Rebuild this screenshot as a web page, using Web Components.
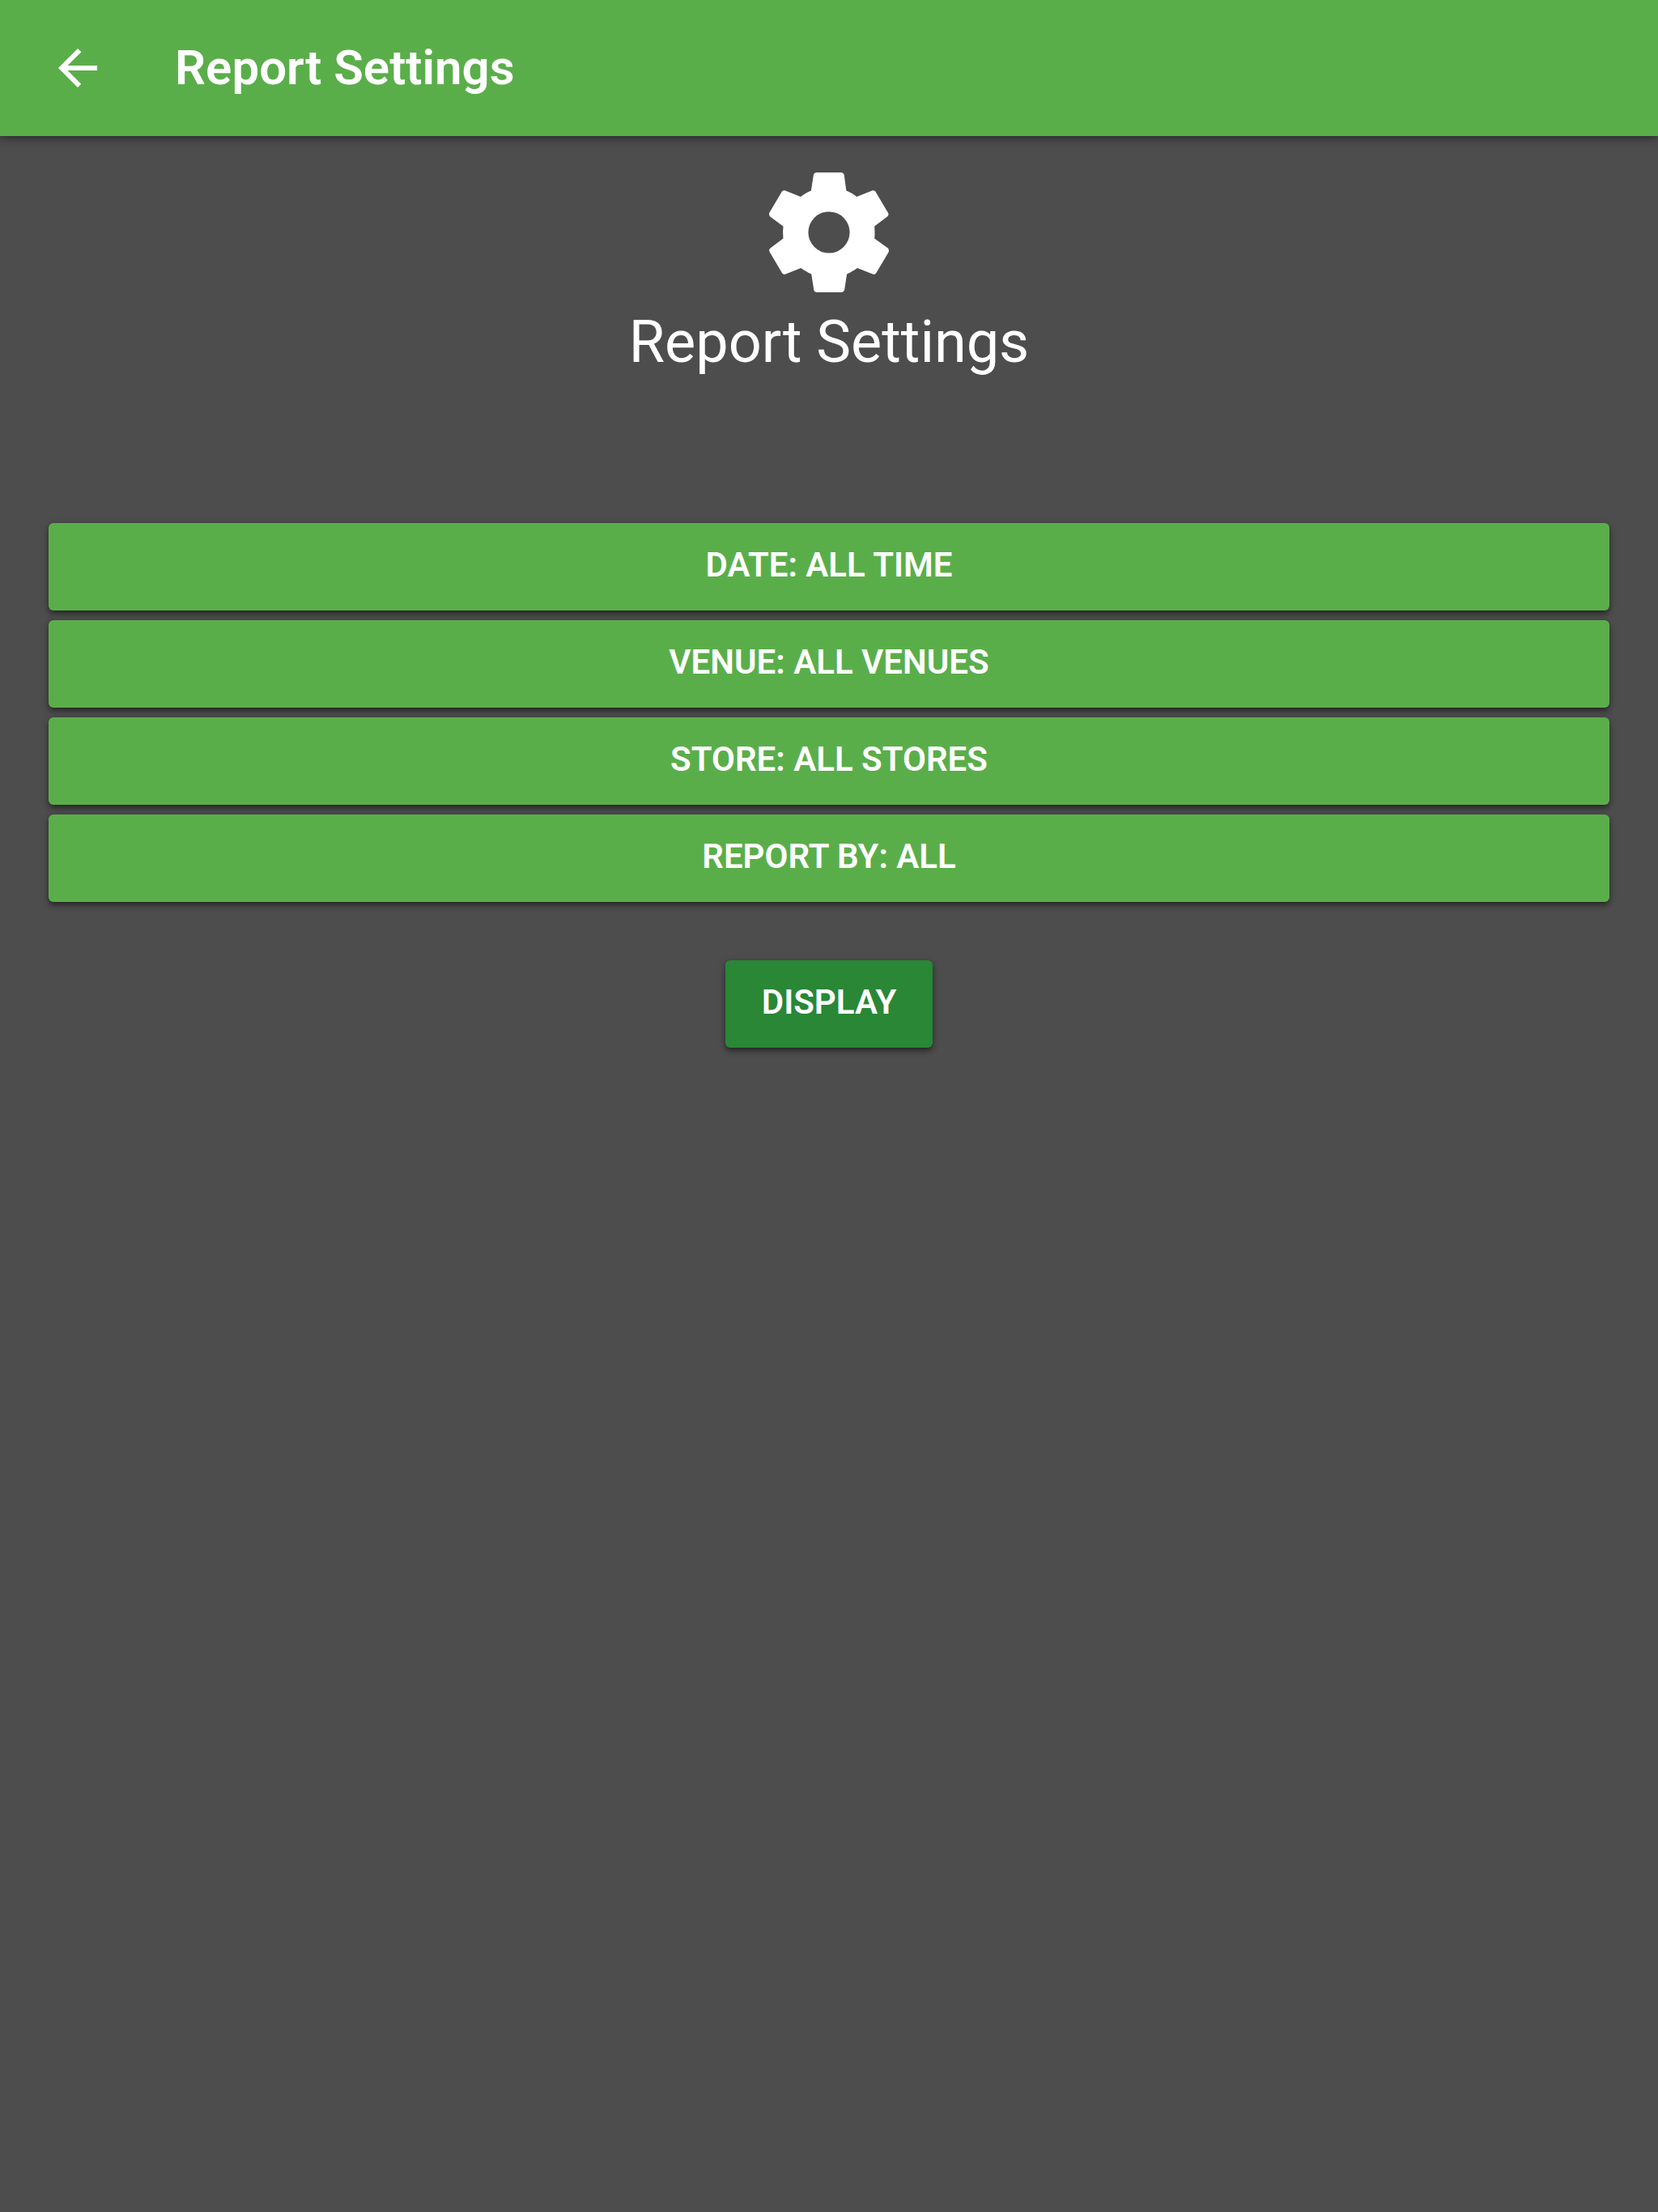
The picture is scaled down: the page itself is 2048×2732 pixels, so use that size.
<!DOCTYPE html>
<html lang="en">
<head>
<meta charset="utf-8">
<meta name="viewport" content="width=device-width, initial-scale=1">
<title>Report Settings</title>
<style>
    html, body {
        margin: 0;
        min-height: 100%;
        background: #4d4d4d;
    }
    body {
        font-family: Roboto, "Liberation Sans", sans-serif;
        color: white;
    }
</style>
</head>
<body>
<settings-page>
    <nav-bar slot="header">Report Settings</nav-bar>
    <page-heading>Report Settings</page-heading>
    <option-list>
        <app-button>Date: All Time</app-button>
        <app-button>Venue: All Venues</app-button>
        <app-button>Store: All Stores</app-button>
        <app-button>Report By: All</app-button>
    </option-list>
    <app-button slot="action" color="secondary">Display</app-button>
</settings-page>

<script>
customElements.define('nav-bar', class NavBar extends HTMLElement {
    constructor() {
        super();
        this.attachShadow({ mode: 'open' });
        this.shadowRoot.innerHTML = `
        <style>
            :host {
                display: block;
            }
            header {
                display: flex;
                align-items: center;
                gap: 48px;
                height: 168px;
                padding: 0 24px;
                background-color: #5aae4a;
                box-shadow: 0 2px 12px rgba(0, 0, 0, 0.5);
            }
            button {
                display: flex;
                align-items: center;
                justify-content: center;
                width: 144px;
                height: 144px;
                padding: 0;
                border: 0;
                background: none;
                color: inherit;
                cursor: pointer;
            }
            svg {
                width: 72px;
                height: 72px;
                fill: currentColor;
            }
            h1 {
                margin: 0;
                font-size: 60px;
                line-height: 72px;
                font-weight: 600;
            }
        </style>
        <header>
            <button type="button" aria-label="Back">
                <svg viewBox="0 0 512 512" aria-hidden="true">
                    <path d="M427 234.625H167.296l119.702-119.702L256 85 85 256l171 171 29.922-29.924-118.626-119.701H427v-42.75z"/>
                </svg>
            </button>
            <h1><slot></slot></h1>
        </header>
        `
    }
});

customElements.define('page-heading', class PageHeading extends HTMLElement {
    constructor() {
        super();
        this.attachShadow({ mode: 'open' });
        this.shadowRoot.innerHTML = `
        <style>
            :host {
                display: flex;
                flex-direction: column;
                align-items: center;
            }
            svg {
                width: 182px;
                height: 182px;
                fill: currentColor;
            }
            h2 {
                margin: 0;
                font-size: 72px;
                line-height: 90px;
                font-weight: 400;
            }
        </style>
        <svg viewBox="0 0 512 512" aria-hidden="true">
            <path d="M413.967 276.8c1.06-6.235 1.06-13.518 1.06-20.8s-1.06-13.518-1.06-20.8l44.667-34.318c4.26-3.118 5.319-8.317 2.13-13.518L418.215 115.6c-2.129-4.164-8.507-6.235-12.767-4.164l-53.186 20.801c-10.638-8.32-23.403-15.601-36.16-20.801l-7.448-55.117c-1.06-4.154-5.319-8.318-10.638-8.318h-85.098c-5.318 0-9.577 4.164-10.637 8.318l-8.508 55.117c-12.767 5.2-24.464 12.482-36.171 20.801l-53.186-20.801c-5.319-2.071-10.638 0-12.767 4.164L49.1 187.365c-2.119 4.153-1.061 10.399 2.129 13.518L96.97 235.2c0 7.282-1.06 13.518-1.06 20.8s1.06 13.518 1.06 20.8l-44.668 34.318c-4.26 3.118-5.318 8.317-2.13 13.518L92.721 396.4c2.13 4.164 8.508 6.235 12.767 4.164l53.187-20.801c10.637 8.32 23.403 15.601 36.16 20.801l8.508 55.117c1.059 5.2 5.318 8.318 10.637 8.318h85.098c5.319 0 9.578-4.164 10.638-8.318l8.507-55.117c12.767-5.2 24.464-12.482 36.171-20.801l53.187 20.801c5.318 2.071 10.637 0 12.766-4.164l42.549-71.765c2.129-4.153 1.06-10.399-2.13-13.518L413.967 276.8zM256 328a72 72 0 1 1 0-144 72 72 0 0 1 0 144z"/>
        </svg>
        <h2><slot></slot></h2>
        `
    }
});

customElements.define('app-button', class AppButton extends HTMLElement {
    constructor() {
        super();
        this.attachShadow({ mode: 'open' });
        this.shadowRoot.innerHTML = `
        <style>
            :host {
                display: block;
                --button-color: #5aae4a;
            }
            :host([color="secondary"]) {
                --button-color: #298736;
            }
            button {
                display: block;
                width: 100%;
                height: 108px;
                padding: 0 45px 4px;
                border: 0;
                border-radius: 6px;
                background-color: var(--button-color);
                box-shadow: 0 6px 3px -6px rgba(0, 0, 0, 0.2), 0 4px 6px rgba(0, 0, 0, 0.4), 0 2px 12px rgba(0, 0, 0, 0.12);
                color: inherit;
                font-family: inherit;
                font-size: 42px;
                line-height: 48px;
                font-weight: 600;
                text-transform: uppercase;
                cursor: pointer;
            }
        </style>
        <button type="button"><slot></slot></button>
        `
    }
});

customElements.define('option-list', class OptionList extends HTMLElement {
    constructor() {
        super();
        this.attachShadow({ mode: 'open' });
        this.shadowRoot.innerHTML = `
        <style>
            :host {
                display: flex;
                flex-direction: column;
                gap: 12px;
            }
        </style>
        <slot></slot>
        `
    }
});

customElements.define('settings-page', class SettingsPage extends HTMLElement {
    constructor() {
        super();
        this.attachShadow({ mode: 'open' });
        this.shadowRoot.innerHTML = `
        <style>
            :host {
                display: block;
            }
            main {
                padding: 28px 60px;
            }
            ::slotted(option-list) {
                margin-top: 178px;
            }
            .action {
                display: flex;
                justify-content: center;
                margin-top: 72px;
            }
        </style>
        <slot name="header"></slot>
        <main>
            <slot></slot>
            <div class="action"><slot name="action"></slot></div>
        </main>
        `
    }
});
</script>
</body>
</html>
